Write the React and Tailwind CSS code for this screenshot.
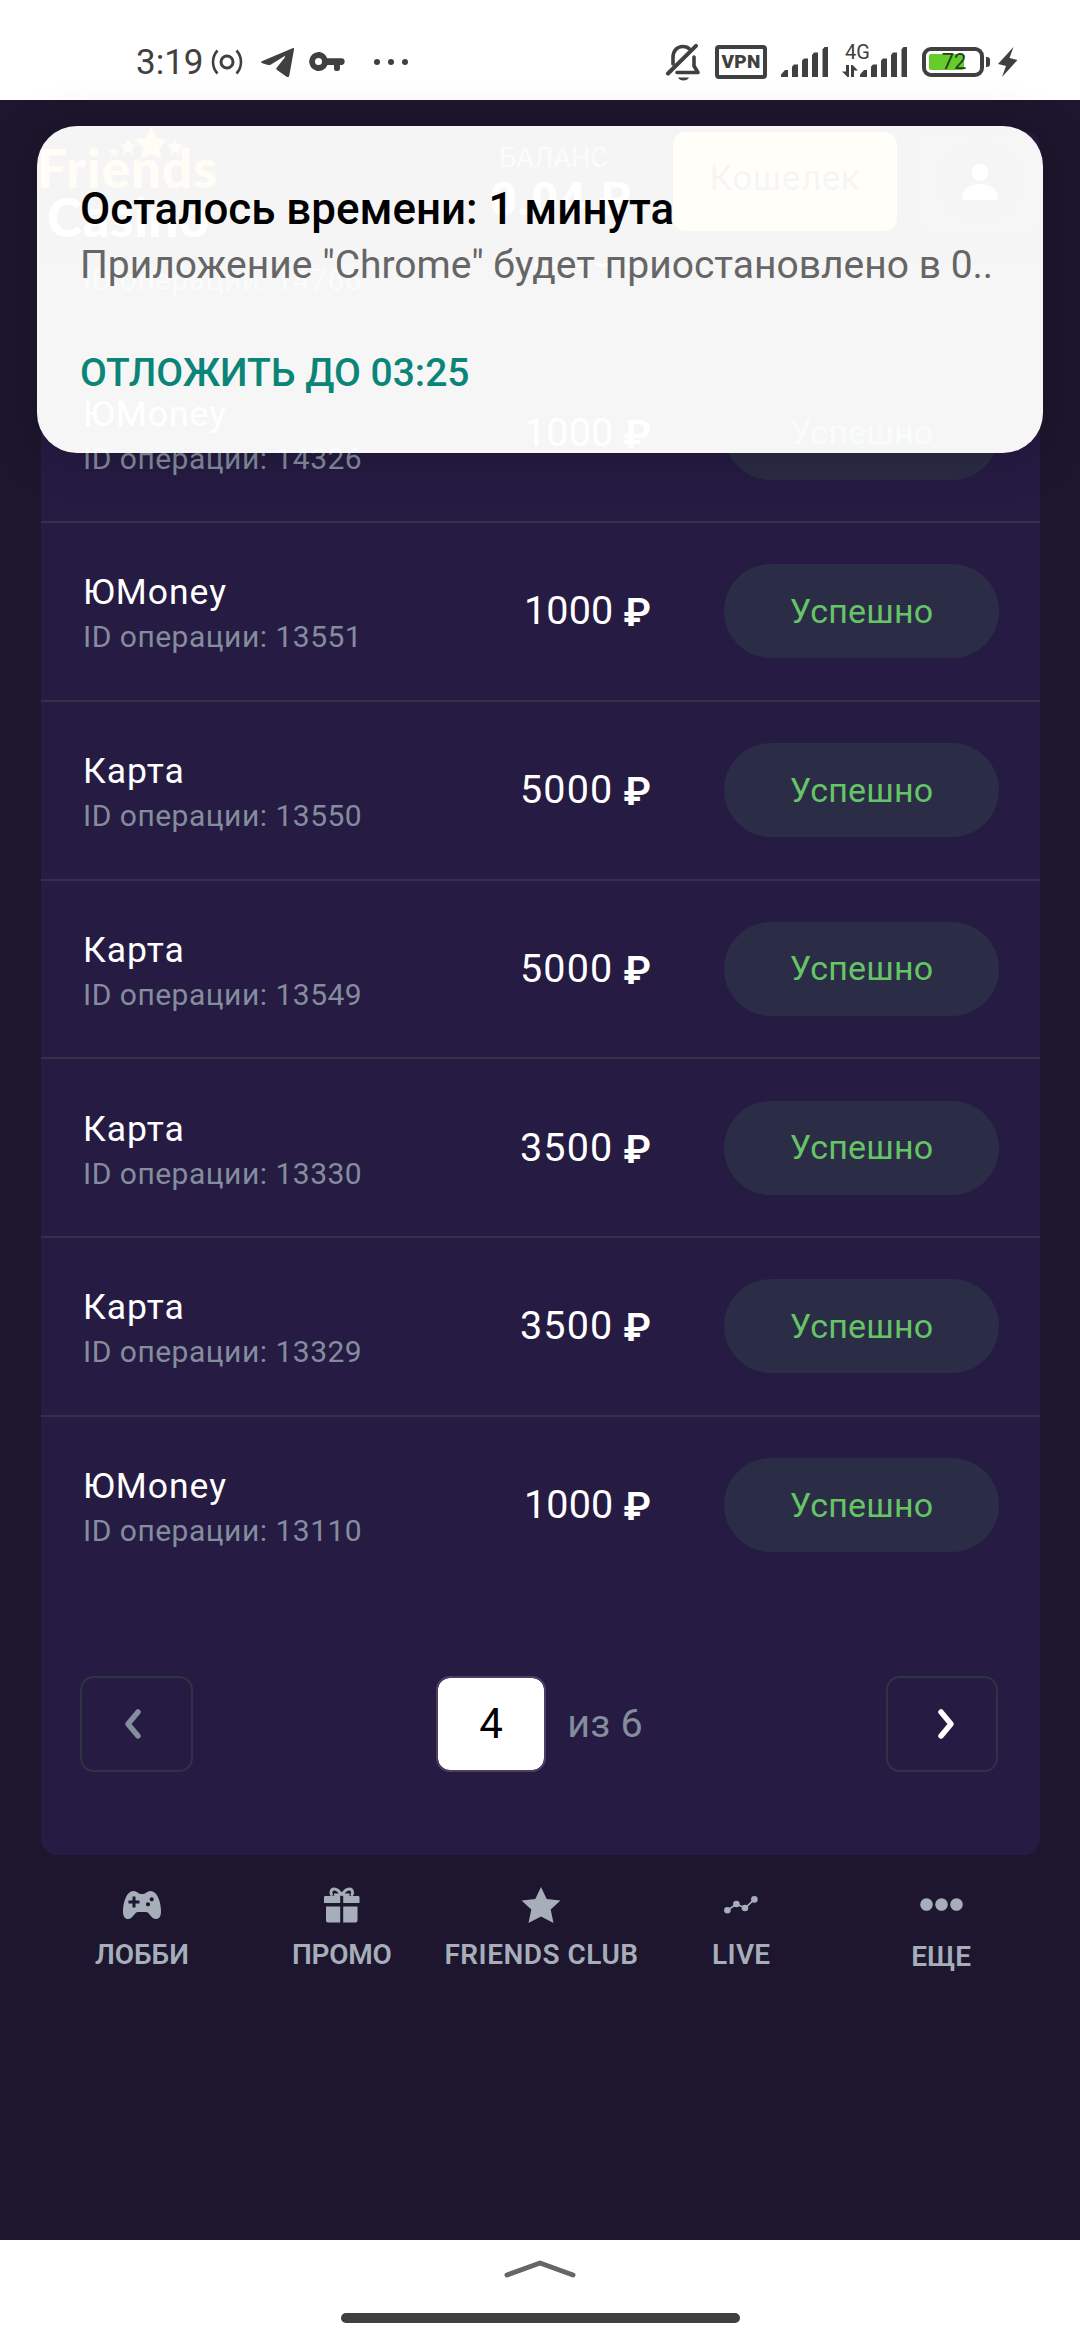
import clsx from "clsx";

const operations = [
  { id: 14766, method: "Карта", amount: 1000 },
  { id: 14326, method: "ЮMoney", amount: 1000 },
  { id: 13551, method: "ЮMoney", amount: 1000 },
  { id: 13550, method: "Карта", amount: 5000 },
  { id: 13549, method: "Карта", amount: 5000 },
  { id: 13330, method: "Карта", amount: 3500 },
  { id: 13329, method: "Карта", amount: 3500 },
  { id: 13110, method: "ЮMoney", amount: 1000 },
];

const SignalBars = () => (
  <svg width="48" height="30" viewBox="0 0 48 30" fill="#404040">
    <path d="M0 30v-2.5L4 23h3v7z" />
    <path d="M11 30V19.500l2-2h4V30z" />
    <path d="M21 30V13.500l2-2h4V30z" />
    <path d="M31 30V8l2-2.500h4V30z" />
    <path d="M41.500 30V2.500l2-2.500H47v30z" />
  </svg>
);

const StatusBar = () => (
  <div className="h-[100px] shrink-0 bg-white flex items-center pt-[24px] text-[#404040]">
    <span className="ml-[136px] w-[68px] text-[35px] leading-none">3:19</span>
    <svg className="ml-[7px]" width="32" height="26" viewBox="0 0 32 26" fill="none" stroke="#404040">
      <circle cx="16" cy="13" r="6" strokeWidth="3" />
      <path d="M6.500 1.500C.5 8 .5 18 6.500 24.500M25.500 1.500c6 6.500 6 16.500 0 23" strokeWidth="2.600" />
    </svg>
    <svg className="ml-[18px] mt-[2px]" width="34" height="30" viewBox="0 0 34 30" fill="#404040">
      <path d="M31.500.2c1-.3 1.700.3 1.500 1.300l-4.700 26c-.3 1.600-1.500 2-2.700 1.200L16 22c-.9-.7-.9-1.600-.1-2.400l8-10.300c.6-.9-.2-1.300-1-.8L10 16.500c-1 .6-2 .7-3 .4l-5.600-1.700c-1.700-.5-1.700-1.500 0-2.200z" />
    </svg>
    <svg className="ml-[14px]" width="36" height="20" viewBox="0 0 36 20" fill="#404040">
      <path fillRule="evenodd" d="M9.500 0c4 0 7.300 2.400 8.700 6.300H32.500a3.400 3.400 0 0 1 .6 6.700v0H31v4a2.500 2.500 0 0 1-2.500 2h-1a2.500 2.500 0 0 1-2.500-2.500V13h-6.500A9.500 9.500 0 1 1 9.500 0zm0 6a3.500 3.500 0 1 0 0 7 3.500 3.500 0 0 0 0-7z" />
    </svg>
    <div className="ml-[29px] flex gap-2">
      <span className="size-[6px] rounded-full bg-[#404040]" />
      <span className="size-[6px] rounded-full bg-[#404040]" />
      <span className="size-[6px] rounded-full bg-[#404040]" />
    </div>

    <div className="ml-auto mr-[62px] flex items-center">
      <svg width="36" height="38" viewBox="0 0 36 38" fill="none" stroke="#404040" strokeWidth="4" strokeLinecap="round">
        <path d="M8 21V14.500C8 8 12 3.500 18 3.500c2.500 0 4.500.8 6 2M29 14v9l4 6.500H12" strokeLinejoin="round" strokeWidth="3.600" />
        <path d="M3 30.500 31 2.800" />
        <path d="M13 34.500h11c-1.500 4-9.500 4-11 0z" fill="#404040" stroke="none" />
      </svg>
      <div className="ml-[14px] w-[52px] h-[34px] border-4 border-[#404040] rounded-[4px] flex items-center justify-center text-[19px] font-black tracking-[0.2px]">
        VPN
      </div>
      <div className="ml-[14px]">
        <SignalBars />
      </div>
      <div className="ml-[13px] relative">
        <div className="pl-[18px]">
          <SignalBars />
        </div>
        <span className="absolute left-[3px] -top-[5px] text-[20px] leading-none">4G</span>
        <svg className="absolute left-0 bottom-0" width="16" height="12" viewBox="0 0 16 12" fill="#404040">
          <path d="M4 0h3v12H5.500L0 6.500h4zM9 12V0h1.500L16 5.500h-4V12z" />
        </svg>
      </div>
      <div className="ml-[14px] relative w-[62px] h-[30px] border-[4px] border-[#404040] rounded-[9px] p-[3px]">
        <div className="w-[35px] h-[16px] bg-[#66cc2b] rounded-[2px]" />
        <span className="absolute inset-0 pl-[2px] flex items-center justify-center text-[22px] leading-none text-[#26401a]">72</span>
      </div>
      <span className="ml-[2px] w-[4px] h-[10px] bg-[#404040] rounded-r-[3px]" />
      <svg className="ml-[8px]" width="20" height="30" viewBox="0 0 20 30" fill="#404040">
        <path d="M15.500 0 0 17l8 2-4 11L19.500 13l-8-2z" />
      </svg>
    </div>
  </div>
);

const Logo = () => (
  <div className="relative w-[180px] h-[110px] font-[Lato,sans-serif] font-black">
    <svg className="absolute left-[68px] -top-[5px]" width="78" height="34" viewBox="0 0 78 34" fill="#ffc21f">
      <path d="m42 0 5 11 12 1.500-9 8 2.500 12L42 26.500l-10.500 6 2.500-12-9-8L37 11z" />
      <path d="m19 12 2.500 5 5.500.8-4 4 1 5.500-5-2.800-5 2.800 1-5.500-4-4 5.500-.8zM66 12l2.500 5 5.500.8-4 4 1 5.500-5-2.800-5 2.800 1-5.500-4-4 5.500-.8zM5 20l1.500 3 3.500.5-2.500 2.500.5 3.500-3-1.700L2 29.500l.5-3.500L0 23.500l3.500-.5z" />
    </svg>
    <div className="pt-[9px] -ml-[4px] text-[53px] leading-[54px] tracking-[1px] text-[#ffc21f]">Friends</div>
    <div className="pl-[6px] text-[53px] leading-[44px] tracking-[0.5px] text-white">Casino</div>
  </div>
);

const Header = () => (
  <header className="h-[163px] shrink-0 bg-[#1d162e] pl-[41px] pr-10 pt-[32px] flex items-start">
    <Logo />
    <div className="ml-auto mr-[41px] text-right">
      <div className="mt-[9px] mr-[24px] text-[27px] leading-[34px] text-[#8fa5a0]">БАЛАНС</div>
      <div className="text-[47px] leading-[48px] font-bold tracking-[0.5px] text-white">0.04 ₽</div>
    </div>
    <button className="w-[224px] h-[99px] rounded-[13px] bg-[#ffe04d] text-[35px] tracking-[0.6px] text-[#1d162e] pb-1">
      Кошелек
    </button>
    <button className="ml-[22px] w-[121px] h-[99px] rounded-[13px] bg-[#261b43] flex items-center justify-center">
      <span className="size-[84px] rounded-full bg-[#1d162e] flex items-center justify-center">
        <svg width="36" height="36" viewBox="0 0 36 36" fill="white">
          <circle cx="18" cy="8.500" r="8.500" />
          <path d="M0 33.500C0 26 8 20 18 20s18 6 18 13.500c0 1.500-1 2.500-2.500 2.500h-31C1 36 0 35 0 33.500z" />
        </svg>
      </span>
    </button>
  </header>
);

const OperationRow = ({ operation, className }) => (
  <div
    className={clsx(
      "h-[178.75px] pl-[42px] pr-[41px] flex items-center border-b-2 border-[#32334a]",
      className
    )}
  >
    <div className="pt-[8px] w-[340px]">
      <div className="text-[35.500px] leading-[44px] tracking-[1px] text-white">
        {operation.method}
      </div>
      <div className="text-[30px] leading-[46px] tracking-[0.5px] text-[#848d9d]">
        ID операции: {operation.id}
      </div>
    </div>
    <div className="w-[228px] flex justify-end items-baseline gap-[10px] text-[39.500px] leading-[48px] text-white">
      <span
        className={clsx(
          operation.amount === 1000 ? "tracking-[0.2px]" : "tracking-[1.2px]"
        )}
      >
        {operation.amount}
      </span>
      <span className="relative top-[2px] font-semibold">₽</span>
    </div>
    <div className="ml-auto w-[275px] h-[94px] rounded-full bg-[#2b2c45] flex items-center justify-center text-[34px] tracking-[0.2px] text-[#65c466]">
      Успешно
    </div>
  </div>
);

const Pagination = () => (
  <div className="mt-[80px] mb-[83px] pl-[39px] pr-[42px] flex items-center justify-between">
    <button className="w-[113px] h-[96px] rounded-[14px] border-2 border-[#2f3346] flex items-center justify-center">
      <svg className="mr-[8px]" width="18" height="32" viewBox="0 0 18 32" fill="none" stroke="#848f9d" strokeWidth="5.500" strokeLinecap="round" strokeLinejoin="round">
        <path d="M14 4 4 16l10 12" />
      </svg>
    </button>
    <div className="flex items-center">
      <div className="w-[110px] h-[96px] rounded-[14px] border-2 border-[#4a4162] bg-white bg-clip-padding flex items-center justify-center text-[42px] text-black">
        4
      </div>
      <span className="ml-[21px] text-[39.500px] tracking-[0.2px] text-[#848d9d]">из 6</span>
    </div>
    <button className="w-[112px] h-[96px] rounded-[14px] border-2 border-[#2f3346] flex items-center justify-center">
      <svg className="ml-[8px]" width="18" height="32" viewBox="0 0 18 32" fill="none" stroke="white" strokeWidth="5.500" strokeLinecap="round" strokeLinejoin="round">
        <path d="m4 4 10 12L4 28" />
      </svg>
    </button>
  </div>
);

const GamepadIcon = () => (
  <svg width="38" height="28" viewBox="0 0 38 28" fill="currentColor">
    <path
      fillRule="evenodd"
      d="M10.500 0c3.500 0 5 3 7 3h3c2 0 3.500-3 7-3C34.500 0 38 11.500 38 20.500c0 5-2 7.500-5 7.500-5 0-6.500-7-10-7h-8c-3.500 0-5 7-10 7-3 0-5-2.500-5-7.500C0 11.500 3.500 0 10.500 0zM9.500 5.500v4h-4v3h4v4h3v-4h4v-3h-4v-4zM28.700 6.200a2.100 2.100 0 1 0 0 4.200 2.100 2.100 0 0 0 0-4.200zM25 11.200a2.100 2.100 0 1 0 0 4.200 2.100 2.100 0 0 0 0-4.200z"
    />
  </svg>
);

const GiftIcon = () => (
  <svg width="36" height="36" viewBox="0 0 36 36" fill="currentColor">
    <path d="M1.500 9h14.700v7H0v-5.500C0 9.500.5 9 1.500 9zM19.200 9h14.800c1 0 1.500.5 1.500 1.500V16H19.200zM2 19.500h14.200v16H4c-1.300 0-2-.7-2-2zM19.200 19.500h14.300v14c0 1.300-.7 2-2 2H19.200z" />
    <path
      d="M17.700 8.500C15.500 4 12.500 2 10 2 6.500 2 6 7 8.500 8.500M17.700 8.500C20 4 23 2 25.500 2 29 2 29.500 7 27 8.500M10 7.500c3 .8 5 .5 7.700-1M25.500 7.500c-3 .8-5 .5-7.800-1"
      fill="none"
      stroke="currentColor"
      strokeWidth="2.800"
    />
  </svg>
);

const StarIcon = () => (
  <svg width="40" height="36" viewBox="0 0 40 36" fill="currentColor">
    <path d="m20 0 5.700 12 13.800 1.500-9.800 9L32.500 36 20 29.500 7.500 36l2.800-13.500-9.800-9L14.300 12z" />
  </svg>
);

const LiveIcon = () => (
  <svg width="34" height="18" viewBox="0 0 34 18" fill="currentColor">
    <path d="m3.400 14.300 9-6.300 8.600 4 9.400-8.700" fill="none" stroke="currentColor" strokeWidth="1.600" />
    <circle cx="3.400" cy="14.300" r="3.300" />
    <circle cx="12.400" cy="8" r="3.300" />
    <circle cx="21" cy="12" r="3.300" />
    <circle cx="30.400" cy="3.400" r="3.300" />
  </svg>
);

const MoreIcon = () => (
  <svg width="43" height="13" viewBox="0 0 43 13" fill="currentColor">
    <circle cx="6.500" cy="6.500" r="6.300" />
    <circle cx="21.500" cy="6.500" r="6.300" />
    <circle cx="36.500" cy="6.500" r="6.300" />
  </svg>
);

const navItems = [
  { label: "ЛОББИ", icon: GamepadIcon },
  { label: "ПРОМО", icon: GiftIcon, labelClass: "tracking-[-0.3px]" },
  { label: "FRIENDS CLUB", icon: StarIcon, labelClass: "tracking-[0.5px]" },
  { label: "LIVE", icon: LiveIcon, labelClass: "tracking-[0.3px]" },
  { label: "ЕЩЕ", icon: MoreIcon, labelClass: "pt-[2px]" },
];

const BottomNav = () => (
  <nav className="ml-[42px] mr-[39px] pt-[32px] grid grid-cols-5 text-[#a5aeb9]">
    {navItems.map(({ label, icon: Icon, labelClass }) => (
      <div key={label} className="flex flex-col items-center">
        <div className="h-9 flex items-center">
          <Icon />
        </div>
        <span
          className={clsx(
            "mt-4 text-[28px] leading-[32px] font-semibold whitespace-nowrap",
            labelClass
          )}
        >
          {label}
        </span>
      </div>
    ))}
  </nav>
);

const Notification = () => (
  <div className="absolute left-[37px] top-[126px] w-[1006px] h-[327px] rounded-[40px] bg-white/96 pl-[43px] pt-[55px] shadow-[0_4px_50px_rgba(0,0,0,0.22)]">
    <div className="text-[43.900px] leading-[56px] font-medium text-black whitespace-nowrap">
      Осталось времени: 1 минута
    </div>
    <div className="text-[39px] leading-[56px] text-[#666] whitespace-nowrap">
      Приложение "Chrome" будет приостановлено в 0..
    </div>
    <div className="mt-[52px] text-[39px] leading-[56px] font-medium text-[#0a8577] whitespace-nowrap">
      ОТЛОЖИТЬ ДО 03:25
    </div>
  </div>
);

const SystemBar = () => (
  <div className="h-[100px] shrink-0 bg-white flex flex-col items-center">
    <svg className="mt-[20px]" width="72" height="18" viewBox="0 0 72 18" fill="none" stroke="#666" strokeWidth="5" strokeLinecap="round" strokeLinejoin="round">
      <path d="m3 15 33-12 33 12" />
    </svg>
    <div className="mt-[35px] w-[399px] h-[10px] rounded-full bg-[#3f3f3f]" />
  </div>
);

export default function App() {
  return (
    <div className="relative w-[1080px] h-[2340px] flex flex-col overflow-hidden bg-[#1d162e] font-[Roboto,sans-serif]">
      <StatusBar />
      <Header />
      <section className="ml-[41px] mr-[40px] rounded-b-[16px] bg-[#261b43] overflow-hidden">
        {operations.map((operation, index) => (
          <OperationRow
            key={operation.id}
            operation={operation}
            className={clsx(
              index === 0 && "-mt-[97.5px]",
              index === operations.length - 1 && "border-transparent"
            )}
          />
        ))}
        <Pagination />
      </section>
      <BottomNav />
      <div className="flex-1" />
      <SystemBar />
      <Notification />
    </div>
  );
}
